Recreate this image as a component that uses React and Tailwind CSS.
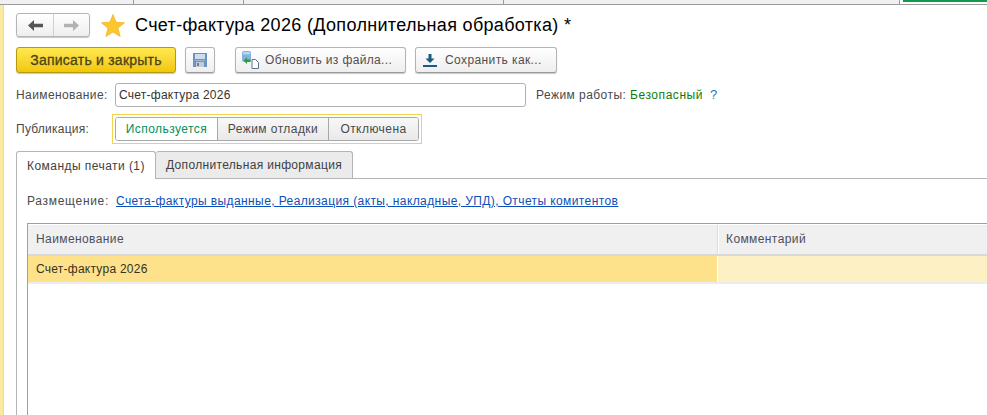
const btn = 'h-[26px] flex items-center rounded-[3px] border border-[#b4b4b4] border-b-[#9a9a9a] bg-gradient-to-b from-white to-[#eeeeee] shadow-[0_1px_1px_#c8c8c8]'

function BackIcon({ color }) {
  return (
    <svg width="15" height="11" viewBox="0 0 15 11">
      <path d="M0 5.5 L6 0 V3.8 H15 V7.2 H6 V11 Z" fill={color} />
    </svg>
  )
}

function ForwardIcon({ color }) {
  return (
    <svg width="15" height="11" viewBox="0 0 15 11">
      <path d="M15 5.5 L9 0 V3.8 H0 V7.2 H9 V11 Z" fill={color} />
    </svg>
  )
}

function StarIcon() {
  return (
    <svg width="24" height="23" viewBox="0 0 24 23">
      <path d="M12 0.5 L15.1 8.2 L23.5 8.8 L17 14.1 L19.2 22.5 L12 18 L4.8 22.5 L7 14.1 L0.5 8.8 L8.9 8.2 Z" fill="#fcc62d" stroke="#f2ad1c" strokeWidth="0.7" />
    </svg>
  )
}

function SaveIcon() {
  return (
    <svg width="14" height="14" viewBox="0 0 14 14">
      <rect width="14" height="14" fill="#6a94c8" />
      <rect x="2" y="1" width="10" height="5" fill="#cfdeee" />
      <rect x="2" y="7" width="10" height="1" fill="#9dbbdc" />
      <rect x="3" y="9" width="8" height="5" fill="#c8ccd0" />
      <rect x="4" y="10" width="2" height="3" fill="#6f8196" />
    </svg>
  )
}

function UpdateIcon() {
  return (
    <svg width="17" height="18" viewBox="0 0 17 18">
      <rect x="0" y="0" width="9" height="11" rx="2" fill="#7fb2e0" />
      <rect x="1" y="1" width="7" height="2.5" rx="1" fill="#b5d5f0" />
      <path d="M10 8.5 H13.5 L16.5 11.5 V17.5 H10 Z" fill="#fff" stroke="#5f7488" />
      <path d="M1.5 9.5 L5 6.5 V8.5 H8.5 V11 H5 V13 Z" fill="#2f9a3e" />
    </svg>
  )
}

function DownloadIcon() {
  return (
    <svg width="14" height="13" viewBox="0 0 14 13">
      <path d="M5.5 0 H8.5 V4.5 H11.5 L7 9 L2.5 4.5 H5.5 Z" fill="#1c5a86" />
      <rect x="0" y="11" width="14" height="2" fill="#1c5a86" />
    </svg>
  )
}

export default function App() {
  return (
    <div className="w-[987px] h-[415px] overflow-hidden bg-white flex flex-col font-['Liberation_Sans',Arial,sans-serif] text-[12px] text-[#4a4a4a]">
      {/* top strip with open tabs */}
      <div className="h-[5px] shrink-0 flex bg-[#f0f0f0] border-b border-[#9a9a9a]">
        <div className="w-[134px] border-r border-[#9a9a9a]" />
        <div className="w-[110px] border-r border-[#9a9a9a]" />
        <div className="w-[260px] border-r border-[#9a9a9a]" />
        <div className="w-[396px] border-r border-[#9a9a9a]" />
        <div className="flex-1 bg-white pl-[3px]">
          <div className="h-[2px] bg-[#0f9a4c]" />
        </div>
      </div>

      <div className="flex-1 flex min-h-0">
        {/* left yellow strip */}
        <div className="w-[4px] shrink-0 bg-[#fbeb9f] border-r border-[#d8d8d8]" />

        <div className="flex-1 min-w-0 pl-[12px] flex flex-col">
          {/* header */}
          <div className="flex items-center h-[24px] mt-[8px]">
            <div className="w-[74px] h-[24px] flex rounded-[3px] border border-[#b4b4b4] bg-gradient-to-b from-white to-[#eeeeee] shadow-[0_1px_1px_#c8c8c8]">
              <div className="w-[37px] flex items-center justify-center border-r border-[#d0d0d0]">
                <BackIcon color="#555555" />
              </div>
              <div className="flex-1 flex items-center justify-center">
                <ForwardIcon color="#b2b2b2" />
              </div>
            </div>
            <div className="ml-[11px]"><StarIcon /></div>
            <div className="ml-[10px] pt-[1px] text-[18px] tracking-[0.33px] text-black whitespace-nowrap">Счет-фактура 2026 (Дополнительная обработка) *</div>
          </div>

          {/* command bar */}
          <div className="flex items-center mt-[10px]">
            <button className="w-[160px] h-[26px] rounded-[3px] border border-[#b59a10] bg-gradient-to-b from-[#ffe94d] to-[#f2c700] shadow-[0_1px_1px_#c8c8c8] text-[14px] tracking-[0.23px] [-webkit-text-stroke:0.3px_#4d4416] text-[#4d4416]">
              Записать и закрыть
            </button>
            <button className={`${btn} w-[30px] ml-[9px] justify-center`}><SaveIcon /></button>
            <button className={`${btn} w-[171px] ml-[20px] pl-[6px] gap-[6px] tracking-[0.35px] text-[#4f4f4f]`}>
              <UpdateIcon />
              Обновить из файла...
            </button>
            <button className={`${btn} w-[142px] ml-[9px] pl-[7px] gap-[8px] tracking-[0.4px] text-[#4f4f4f]`}>
              <DownloadIcon />
              Сохранить как...
            </button>
          </div>

          {/* name */}
          <div className="flex items-center mt-[10px] h-[24px]">
            <div className="w-[99px] tracking-[0.4px]">Наименование:</div>
            <div className="w-[411px] h-[24px] rounded-[3px] border border-[#b0b0b0] pl-[3px] flex items-center text-[#333333] tracking-[0.25px]">Счет-фактура 2026</div>
            <div className="ml-[10px] tracking-[0.45px] whitespace-nowrap">
              Режим работы: <span className="text-[#0a7d10] tracking-[0.55px]">Безопасный</span>
              <span className="ml-[7px] text-[13px] text-[#1c7cc0]">?</span>
            </div>
          </div>

          {/* publication */}
          <div className="flex items-center mt-[7px]">
            <div className="w-[96px] tracking-[0.25px]">Публикация:</div>
            <div className="border border-[#f3d24f] p-[2px]">
              <div className="w-[304px] h-[24px] flex rounded-[3px] border border-[#a8a8a8] tracking-[0.45px] overflow-hidden">
                <div className="w-[102px] flex items-center justify-center bg-white text-[#00915c] border-r border-[#a8a8a8]">Используется</div>
                <div className="w-[111px] flex items-center justify-center bg-gradient-to-b from-[#f8f8f8] to-[#e9e9e9] border-r border-[#a8a8a8]">Режим отладки</div>
                <div className="flex-1 flex items-center justify-center bg-gradient-to-b from-[#f8f8f8] to-[#e9e9e9]">Отключена</div>
              </div>
            </div>
          </div>

          {/* tabs */}
          <div className="flex mt-[7px] h-[27px] relative z-10">
            <div className="w-[140px] h-[28px] flex items-center justify-center bg-white border border-[#b4b4b4] border-b-0 rounded-t-[3px] tracking-[0.45px] text-[#3f3f3f]">
              Команды печати (1)
            </div>
            <div className="w-[197px] flex items-center justify-center bg-[#ebebeb] border border-l-0 border-[#b4b4b4] border-b-0 rounded-t-[3px] tracking-[0.33px] text-[#3f3f3f]">
              Дополнительная информация
            </div>
          </div>

          <div className="flex-1 min-h-0 border-l border-t border-[#b4b4b4] pl-[10px] flex flex-col">
            <div className="h-[44px] flex items-center">
              <span className="tracking-[0.7px]">Размещение:</span>
              <a className="ml-[7px] text-[#0d4fb8] tracking-[0.4px] underline whitespace-nowrap">Счета-фактуры выданные, Реализация (акты, накладные, УПД), Отчеты комитентов</a>
            </div>

            {/* table */}
            <div className="flex-1 min-h-0 border-l border-t border-[#a0a0a0]">
              <div className="h-[30px] flex bg-[#f0f0f0] border-t border-white tracking-[0.4px] text-[#4e4e5c]">
                <div className="w-[690px] pl-[8px] pb-[2px] flex items-center border-r border-[#dcdcdc]">Наименование</div>
                <div className="flex-1 pl-[7px] pb-[2px] flex items-center border-l border-white">Комментарий</div>
              </div>
              <div className="h-[30px] flex border-t-2 border-b-2 border-t-[#d8d8d8] border-b-[#ececec] box-border">
                <div className="w-[690px] pl-[8px] flex items-center bg-[#fde28b] text-[#3a3020] tracking-[0.25px] border-r border-white">Счет-фактура 2026</div>
                <div className="flex-1 bg-[#fdf0c4]" />
              </div>
            </div>
          </div>
        </div>
      </div>
    </div>
  )
}
